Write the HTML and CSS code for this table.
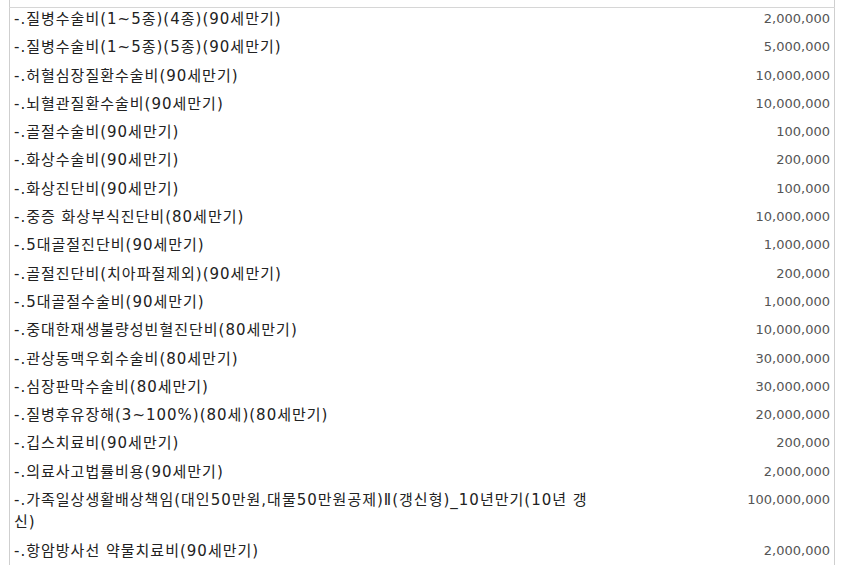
FILE: index.html
```html
<!DOCTYPE html>
<html>
  <head>
    <meta charset="utf-8">
    <title>보장내용</title>
    <link rel="stylesheet" href="styles.css">
  </head>
  <body>
    <div class="sheet">
      <table class="cover">
        <thead>
          <tr><th class="name">보장명 및 보장내용</th><th class="amt">가입금액(원)</th></tr>
        </thead>
        <tbody>
          <tr class="first"><td class="name">-.질병수술비(1~5종)(4종)(90세만기)</td><td class="amt">2,000,000</td></tr>
          <tr><td class="name">-.질병수술비(1~5종)(5종)(90세만기)</td><td class="amt">5,000,000</td></tr>
          <tr><td class="name">-.허혈심장질환수술비(90세만기)</td><td class="amt">10,000,000</td></tr>
          <tr><td class="name">-.뇌혈관질환수술비(90세만기)</td><td class="amt">10,000,000</td></tr>
          <tr><td class="name">-.골절수술비(90세만기)</td><td class="amt">100,000</td></tr>
          <tr><td class="name">-.화상수술비(90세만기)</td><td class="amt">200,000</td></tr>
          <tr><td class="name">-.화상진단비(90세만기)</td><td class="amt">100,000</td></tr>
          <tr><td class="name">-.중증 화상부식진단비(80세만기)</td><td class="amt">10,000,000</td></tr>
          <tr><td class="name">-.5대골절진단비(90세만기)</td><td class="amt">1,000,000</td></tr>
          <tr><td class="name">-.골절진단비(치아파절제외)(90세만기)</td><td class="amt">200,000</td></tr>
          <tr><td class="name">-.5대골절수술비(90세만기)</td><td class="amt">1,000,000</td></tr>
          <tr><td class="name">-.중대한재생불량성빈혈진단비(80세만기)</td><td class="amt">10,000,000</td></tr>
          <tr><td class="name">-.관상동맥우회수술비(80세만기)</td><td class="amt">30,000,000</td></tr>
          <tr><td class="name">-.심장판막수술비(80세만기)</td><td class="amt">30,000,000</td></tr>
          <tr><td class="name">-.질병후유장해(3~100%)(80세)(80세만기)</td><td class="amt">20,000,000</td></tr>
          <tr><td class="name">-.깁스치료비(90세만기)</td><td class="amt">200,000</td></tr>
          <tr><td class="name">-.의료사고법률비용(90세만기)</td><td class="amt">2,000,000</td></tr>
          <tr><td class="name">-.가족일상생활배상책임(대인50만원,대물50만원공제)Ⅱ(갱신형)_10년만기(10년 갱신)</td><td class="amt">100,000,000</td></tr>
          <tr><td class="name">-.항암방사선 약물치료비(90세만기)</td><td class="amt">2,000,000</td></tr>
        </tbody>
      </table>
    </div>
  </body>
</html>
```

FILE: styles.css
```css
html, body {margin:0;padding:0;overflow:hidden}

body {
  background-color: #ffffff;
  color: #222222;
  font-family: 'DejaVu Sans', 'Noto Sans CJK KR', sans-serif;
  font-size: 15px;
}

.sheet {
  margin: -16px 0 0 9px;
  width: 826px;
}

.cover {
  width: 100%;
  border-collapse: collapse;
  border-left: 1px solid #cfcfcf;
  border-right: 1px solid #cfcfcf;
}

.cover th {
  height: 23px;
  padding: 0 4px;
  font-weight: normal;
  font-size: 13px;
  line-height: 16px;
  vertical-align: top;
  border-bottom: 1px solid #d6d6d6;
}

.cover th.name {
  text-align: left;
  padding-left: 145px;
}

.cover th.amt {
  text-align: left;
}

.cover td {
  padding: 3px 4px;
  line-height: 22.3px;
  vertical-align: top;
}

.cover tr.first td {
  padding-top: 0;
}

td.name {
  width: 584px;
  text-align: left;
  letter-spacing: 1px;
}

td.amt {
  text-align: right;
  font-family: 'DejaVu Sans', sans-serif;
  font-size: 13px;
  color: #555555;
  white-space: nowrap;
}
```
